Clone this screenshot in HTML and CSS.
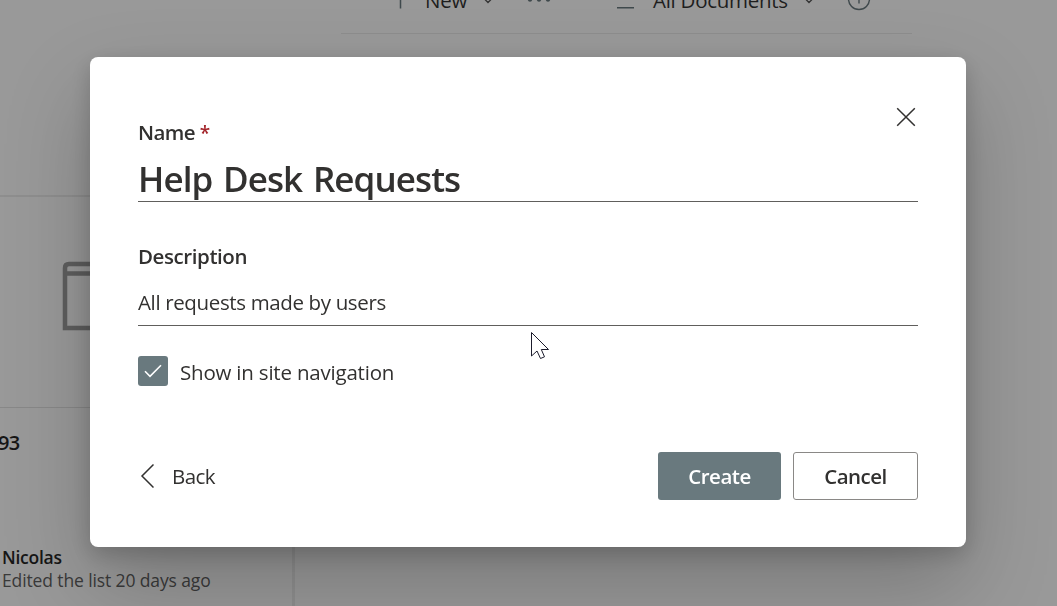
FILE: index.html
```html
<!DOCTYPE html>
<html lang="en">
<head>
    <meta charset="utf-8">
    <title>Create list</title>
    <link rel="stylesheet" href="styles.css">
</head>
<body>
    <div class="page">
        <div class="list-card">
            <div class="card-preview">
                <svg class="window-icon" width="84" height="70" viewBox="0 0 84 70" fill="none" stroke="#5e5e5e" stroke-width="4.5">
                    <path d="M3 67V7q0-4 4-4h70q4 0 4 4v60zM3 12.5h78"/>
                </svg>
            </div>
            <div class="card-title">93</div>
            <div class="card-author">
                <div class="author-name">Nicolas</div>
                <div class="author-activity">Edited the list 20 days ago</div>
            </div>
        </div>
        <div class="command-bar">
            <svg class="plus-icon" width="18" height="22" viewBox="0 0 18 22" stroke="#3f494c" stroke-width="1.5">
                <path d="M9.5 0v19.5M0 9h18"/>
            </svg>
            <span class="new-label">New</span>
            <svg class="chevron" width="12" height="8" viewBox="0 0 12 8" fill="none" stroke="#333" stroke-width="1.3">
                <path d="M1.5 2L6 6.5 10.5 2"/>
            </svg>
            <svg class="dots" width="24" height="6" viewBox="0 0 24 6" fill="#3f494c">
                <circle cx="3" cy="2.5" r="2.2"/><circle cx="12" cy="2.5" r="2.2"/><circle cx="21" cy="2.5" r="2.2"/>
            </svg>
            <svg class="view-icon" width="17" height="18" viewBox="0 0 17 18" stroke="#3f494c" stroke-width="1.6">
                <path d="M0 0h17M0 7h17M0 16.8h17"/>
            </svg>
            <span class="view-label">All Documents</span>
            <svg class="chevron view-chevron" width="12" height="8" viewBox="0 0 12 8" fill="none" stroke="#333" stroke-width="1.3">
                <path d="M1.5 2L6 6.5 10.5 2"/>
            </svg>
            <svg class="info-icon" width="24" height="24" viewBox="0 0 24 24" fill="none" stroke="#3f494c" stroke-width="1.4">
                <circle cx="12" cy="11" r="10.5"/><path d="M12 9v6.5M12 5v2"/>
            </svg>
        </div>
    </div>

    <div class="overlay">
        <form class="dialog" onsubmit="return false;">
            <button type="button" class="close" aria-label="Close">
                <svg width="20" height="20" viewBox="0 0 20 20" stroke="#323130" stroke-width="1.5">
                    <path d="M1.2 1.2l17.6 17.6M18.8 1.2L1.2 18.8"/>
                </svg>
            </button>
            <label class="name-label" for="name">Name <span class="required">*</span></label>
            <input type="text" id="name" class="name-input" value="Help Desk Requests">
            <label class="description-label" for="description">Description</label>
            <input type="text" id="description" class="description-input" value="All requests made by users">
            <div class="nav-option">
                <span class="checkbox">
                    <svg width="18" height="14" viewBox="0 0 18 14" fill="none" stroke="#fff" stroke-width="1.6">
                        <path d="M1 7.3l5 5L17 1.3"/>
                    </svg>
                </span>
                <span class="option-label">Show in site navigation</span>
            </div>
            <div class="actions">
                <button type="button" class="back">
                    <svg width="14" height="26" viewBox="0 0 14 26" fill="none" stroke="#323130" stroke-width="1.5">
                        <path d="M13.5 1.5L2 13l11.5 11.5"/>
                    </svg>
                    <span>Back</span>
                </button>
                <button type="button" class="create">Create</button>
                <button type="button" class="cancel">Cancel</button>
            </div>
        </form>
    </div>

    <svg class="pointer" width="20" height="29" viewBox="0 0 20 29" fill="#fff" stroke="#1c1c2c" stroke-width="1">
        <path d="M1.5 1.5v23.5l5.5-5 3.5 7.5 4-1.7-3.2-7.3h7.2z"/>
    </svg>
</body>
</html>
```
FILE: styles.css
```css
* {
    box-sizing: border-box;
}
body {
    margin: 0;
    height: 606px;
    overflow: hidden;
    background-color: #999;
    color: #323130;
    font-family: "Open Sans", "Noto Sans", sans-serif;
    font-size: 20.5px;
    line-height: 28px;
    white-space: nowrap;
}
button, input {
    font: inherit;
    letter-spacing: inherit;
    color: inherit;
    padding: 0;
    border: 0;
    background: none;
}
svg {
    display: block;
    flex: none;
}
.page {
    display: flex;
    align-items: flex-start;
    height: 606px;
    overflow: hidden;
}

/* List card */
.list-card {
    width: 295px;
    height: 440px;
    margin-top: 195px;
    border-top: 2px solid #8e8e8e;
    border-right: 3px solid #8f8f8f;
}
.card-preview {
    height: 211px;
    padding: 64px 0 0 62px;
    border-bottom: 1px solid #888;
}
.card-title {
    margin: 21px 0 0 -2px;
    font-weight: 600;
    font-size: 20px;
    letter-spacing: -0.6px;
    color: #161616;
}
.card-author {
    margin: 89px 0 0 2px;
    font-size: 17.5px;
    line-height: 23px;
    letter-spacing: -0.12px;
}
.author-name {
    font-weight: 600;
    letter-spacing: -0.25px;
    color: #161616;
}
.author-activity {
    color: #3a3a3a;
}

/* Command bar */
.command-bar {
    display: flex;
    align-items: center;
    width: 571px;
    height: 67px;
    margin: -33px 0 0 46px;
    padding-left: 50px;
    border-bottom: 1px solid #8d8d8d;
    color: #1e1e1e;
}
.new-label {
    width: 43px;
    margin-left: 16px;
    letter-spacing: -0.2px;
}
.command-bar .chevron {
    margin-left: 14px;
}
.dots {
    margin-left: 33px;
}
.view-icon {
    margin-left: 66px;
}
.view-label {
    width: 135px;
    margin-left: 19px;
    letter-spacing: -0.27px;
}
.command-bar .view-chevron {
    margin-left: 15px;
}
.info-icon {
    margin-left: 32px;
}

/* Dialog */
.overlay {
    position: fixed;
    inset: 0;
    padding: 57px 0 0 90px;
}
.dialog {
    position: relative;
    display: flex;
    flex-direction: column;
    width: 876px;
    height: 490px;
    padding: 61px 48px 47px;
    border-radius: 8px;
    background-color: #fff;
    box-shadow: 0 38px 86px rgba(0,0,0,0.22), 0 7px 22px rgba(0,0,0,0.18);
}
.close {
    position: absolute;
    top: 50px;
    right: 50px;
}
.name-label, .description-label {
    height: 28px;
    font-weight: 600;
    letter-spacing: -0.42px;
}
.name-label {
    letter-spacing: -0.6px;
}
.required {
    font-size: 19px;
    color: #a4262c;
}
.name-input {
    height: 48px;
    margin-top: 8px;
    padding-top: 2px;
    border-bottom: 1px solid #605e5c;
    font-size: 35px;
    font-weight: 600;
    letter-spacing: -0.92px;
    word-spacing: 2.5px;
}
.description-label {
    margin-top: 40px;
}
.description-input {
    height: 48px;
    margin-top: 8px;
    border-bottom: 1px solid #605e5c;
    letter-spacing: -0.36px;
}
.nav-option {
    display: flex;
    align-items: center;
    height: 30px;
    margin-top: 30px;
}
.option-label {
    padding-top: 2px;
    letter-spacing: -0.2px;
}
.checkbox {
    display: flex;
    align-items: center;
    justify-content: center;
    width: 30px;
    height: 30px;
    margin-right: 12px;
    border-radius: 3px;
    background-color: #69797e;
}
.actions {
    display: flex;
    align-items: center;
    height: 48px;
    margin-top: auto;
}
.back {
    display: flex;
    align-items: center;
    gap: 18px;
    margin: 0 auto 0 2px;
    letter-spacing: -0.6px;
}
.create, .cancel {
    height: 48px;
    border-radius: 3px;
    font-weight: 600;
    letter-spacing: -0.5px;
}
.create {
    width: 123px;
    margin-right: 12px;
    background-color: #69797e;
    color: #fff;
}
.cancel {
    width: 125px;
    border: 1px solid #8a8886;
}
.pointer {
    position: absolute;
    left: 530px;
    top: 331px;
}
```
